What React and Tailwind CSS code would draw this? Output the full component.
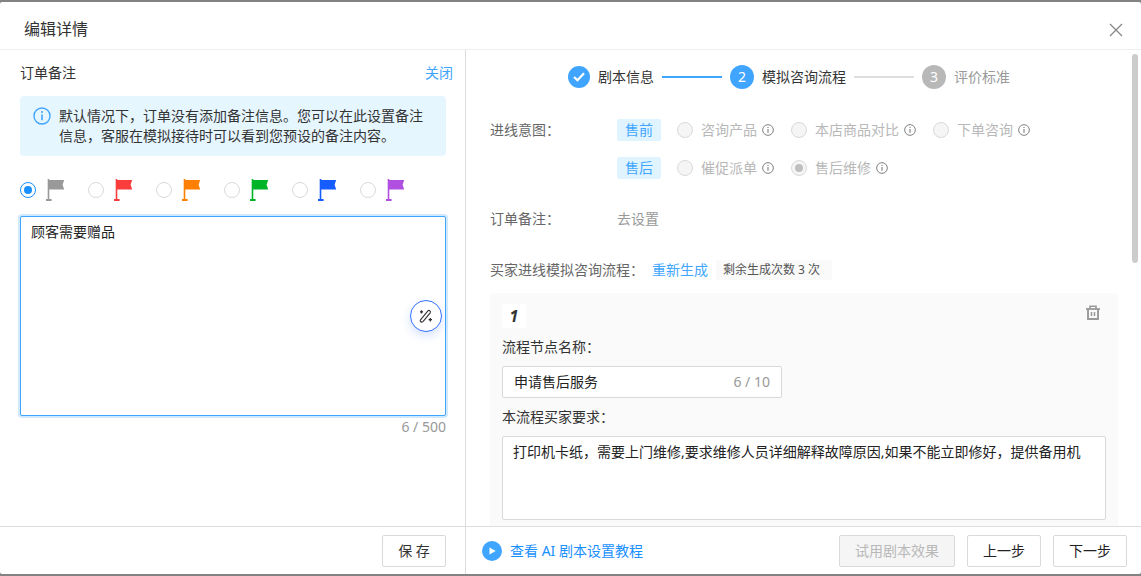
import { useState } from "react";

const FLAGS = [
  { id: "gray", label: "灰旗", color: "#999999" },
  { id: "red", label: "红旗", color: "#f93c3c" },
  { id: "orange", label: "橙旗", color: "#ff8000" },
  { id: "green", label: "绿旗", color: "#00b42a" },
  { id: "blue", label: "蓝旗", color: "#165dff" },
  { id: "purple", label: "紫旗", color: "#b150e0" },
];

const INTENTS = [
  { tag: "售前", options: ["咨询产品", "本店商品对比", "下单咨询"] },
  { tag: "售后", options: ["催促派单", "售后维修"] },
];

function FlagIcon({ color }) {
  return (
    <svg width="20" height="22" viewBox="0 0 20 22" aria-hidden>
      <path d="M1.700 0h1.600v20H5.600v2H0v-2h1.700z" fill={color} />
      <path d="M3 1h15.200l-1.600 4.800L18.200 10.500H3z" fill={color} />
    </svg>
  );
}

function InfoIcon({ className }) {
  return (
    <svg viewBox="0 0 18 18" fill="none" stroke="currentColor" className={className} aria-hidden>
      <circle cx="9" cy="9" r="8" strokeWidth="1.4" />
      <path d="M9 7.500v5.700" strokeWidth="1.600" />
      <circle cx="9" cy="5" r="1" fill="currentColor" stroke="none" />
    </svg>
  );
}

function WandIcon() {
  return (
    <svg width="14" height="14" viewBox="0 0 14 14" fill="none" stroke="#333" strokeWidth="1.1" aria-hidden>
      <path d="M1.300 11.200 8.900 1.900a1.500 1.500 0 0 1 2.300 1.900L4.200 12.300a1.600 1.600 0 0 1-2.700.1 1.100 1.100 0 0 1-.2-1.200z" />
      <path d="M2.500 1.300v3.200M.9 2.900h3.200M11.300 9v3.400M9.600 10.700H13" strokeWidth="1.300" />
    </svg>
  );
}

function TrashIcon() {
  return (
    <svg width="14" height="15" viewBox="0 0 14 15" fill="none" stroke="currentColor" aria-hidden>
      <path d="M0 4h14" strokeWidth="1.800" />
      <path d="M4 4V1.200h6V4" strokeWidth="1.600" />
      <path d="M2 4v10h10V4" strokeWidth="1.900" />
      <path d="M5.500 7v4M8.500 7v4" strokeWidth="1.500" />
    </svg>
  );
}

function Step({ number, title, state }) {
  const done = state === "done";
  const wait = state === "wait";
  return (
    <li className="flex items-center gap-2">
      <span
        className={`flex items-center justify-center rounded-full text-white ${
          done ? "size-[22px]" : "size-6"
        } ${wait ? "bg-[#b8b8b8]" : "bg-[#40a5ff]"}`}
      >
        {done ? (
          <svg width="12" height="10" viewBox="0 0 12 10" fill="none" stroke="#fff" strokeWidth="2.200" aria-hidden>
            <path d="m1 5 3.500 3.300L11 1.300" />
          </svg>
        ) : (
          number
        )}
      </span>
      <span className={wait ? "text-[#999]" : "text-[#333]"}>{title}</span>
    </li>
  );
}

function NotePanel() {
  const [flag, setFlag] = useState("gray");
  const [note, setNote] = useState("顾客需要赠品");

  return (
    <section className="flex w-[466px] shrink-0 flex-col border-r border-[#ddd]">
      <div className="min-h-0 flex-1 overflow-hidden pl-5 pt-3">
        <div className="flex justify-between pr-3">
          <label htmlFor="note">订单备注</label>
          <button type="button" className="text-[#40a5ff]">
            关闭
          </button>
        </div>

        <div className="mr-[19px] mt-3 flex gap-2 rounded bg-[#e6f6ff] px-[13px] py-2.5">
          <InfoIcon className="mt-px size-[18px] shrink-0 text-[#40a5ff]" />
          <p className="leading-5">
            默认情况下，订单没有添加备注信息。您可以在此设置备注信息，客服在模拟接待时可以看到您预设的备注内容。
          </p>
        </div>

        <div className="mt-[23px] flex" role="radiogroup" aria-label="旗帜">
          {FLAGS.map((item) => (
            <label key={item.id} className="flex w-[68px] items-center gap-2.5">
              <input
                type="radio"
                name="flag"
                aria-label={item.label}
                checked={flag === item.id}
                onChange={() => setFlag(item.id)}
                className="grid size-4 appearance-none place-content-center rounded-full border border-[#d9d9d9] bg-white before:size-2 before:rounded-full checked:border-[#1890ff] checked:before:bg-[#1890ff]"
              />
              <FlagIcon color={item.color} />
            </label>
          ))}
        </div>

        <div className="relative mr-[19px] mt-[15px]">
          <textarea
            id="note"
            value={note}
            maxLength={500}
            onChange={(e) => setNote(e.target.value)}
            className="block h-[200px] w-full resize-none rounded-xs border border-[#40a5ff] bg-white px-2.5 py-1 leading-[22px] text-[#222] shadow-[0_0_0_2px_rgba(24,144,255,0.2)] outline-none"
          />
          <button
            type="button"
            aria-label="智能润色"
            className="absolute right-1 top-[84px] flex size-8 items-center justify-center rounded-full border border-[#3370ff] bg-white shadow-[0_4px_10px_rgba(51,112,255,0.2)]"
          >
            <WandIcon />
          </button>
        </div>
        <p className="mr-[19px] text-right text-[#999]">{note.length} / 500</p>
      </div>

      <footer className="flex justify-end border-t border-[#ddd] pb-[7px] pr-[19px] pt-2">
        <button type="button" className="h-8 w-16 rounded-xs border border-[#d9d9d9] bg-white">
          保 存
        </button>
      </footer>
    </section>
  );
}

function IntentRow({ tag, options }) {
  return (
    <div className="flex items-center">
      <span className="mr-4 rounded-xs bg-[#e0f4ff] px-2 text-[#40a5ff]">{tag}</span>
      {options.map((option) => (
        <label key={option} className="mr-[17px] flex items-center text-[#b8b8b8]">
          <input
            type="radio"
            name="intent"
            disabled
            defaultChecked={option === "售后维修"}
            className="mr-2 grid size-4 appearance-none place-content-center rounded-full border border-[#d9d9d9] bg-[#f5f5f5] before:size-2 before:rounded-full checked:before:bg-[#bfbfbf]"
          />
          {option}
          <InfoIcon className="ml-[5px] size-3 text-[#777]" />
        </label>
      ))}
    </div>
  );
}

function ScriptPanel() {
  const [nodeName, setNodeName] = useState("申请售后服务");

  return (
    <section className="flex min-w-0 flex-1 flex-col">
      <div className="relative min-h-0 flex-1 overflow-hidden pl-6 pr-[23px] pt-[15px]">
        <ol className="flex items-center justify-center gap-2 pr-[30px]">
          <Step state="done" title="剧本信息" />
          <li className="h-0.5 w-[60px] bg-[#40a5ff]" aria-hidden />
          <Step state="active" number={2} title="模拟咨询流程" />
          <li className="h-0.5 w-[60px] bg-[#ddd]" aria-hidden />
          <Step state="wait" number={3} title="评价标准" />
        </ol>

        <div className="mt-[30px] flex">
          <span className="w-[127px] shrink-0 text-[#666]">进线意图：</span>
          <div className="flex flex-col gap-4">
            {INTENTS.map((row) => (
              <IntentRow key={row.tag} {...row} />
            ))}
          </div>
        </div>

        <div className="mt-[29px] flex">
          <span className="w-[127px] shrink-0 text-[#666]">订单备注：</span>
          <button type="button" className="text-[#999]">
            去设置
          </button>
        </div>

        <div className="mt-[29px] flex items-center gap-2">
          <span className="text-[#666]">买家进线模拟咨询流程：</span>
          <button type="button" className="text-[#40a5ff]">
            重新生成
          </button>
          <span className="bg-[#fafafa] pl-[7px] pr-3 text-xs leading-5 text-[#555]">剩余生成次数 3 次</span>
        </div>

        <div className="mt-3 rounded bg-[#fafafa] px-3 pb-6 pt-[11px]">
          <div className="flex items-start justify-between">
            <span className="flex size-6 items-center justify-center rounded-xs bg-white text-base font-bold italic">
              1
            </span>
            <button type="button" aria-label="删除流程" className="mr-1.5 mt-px text-[#999]">
              <TrashIcon />
            </button>
          </div>

          <label htmlFor="node-name" className="mt-2 block">
            流程节点名称：
          </label>
          <div className="mt-2 flex h-8 w-[280px] items-center rounded-xs border border-[#d9d9d9] bg-white px-[11px]">
            <input
              id="node-name"
              type="text"
              value={nodeName}
              maxLength={10}
              onChange={(e) => setNodeName(e.target.value)}
              className="min-w-0 flex-1 bg-transparent text-[#222] outline-none"
            />
            <span className="text-[#999]">{nodeName.length} / 10</span>
          </div>

          <label htmlFor="demand" className="mt-2 block">
            本流程买家要求：
          </label>
          <textarea
            id="demand"
            defaultValue="打印机卡纸，需要上门维修,要求维修人员详细解释故障原因,如果不能立即修好，提供备用机"
            className="mt-2 block h-[84px] w-full resize-none rounded-xs border border-[#d9d9d9] bg-white px-2.5 py-1 leading-[22px] text-[#222] outline-none"
          />
        </div>

        {/* scrollbar thumb */}
        <div className="absolute right-[3px] top-1 h-[209px] w-1.5 rounded-full bg-[#ccc]" aria-hidden />
      </div>

      <footer className="flex items-center justify-between border-t border-[#ddd] pb-[7px] pl-4 pr-3.5 pt-2">
        <a href="#guide" className="flex items-center gap-2 text-[#1890ff]">
          <svg width="20" height="20" viewBox="0 0 20 20" aria-hidden>
            <circle cx="10" cy="10" r="10" fill="#40a5ff" />
            <path d="M7.500 6.500v7l6.200-3.500z" fill="#fff" />
          </svg>
          查看 AI 剧本设置教程
        </a>
        <div className="flex gap-3">
          <button
            type="button"
            disabled
            className="h-8 rounded-xs border border-[#d9d9d9] bg-[#f5f5f5] px-[15px] text-[#b8b8b8]"
          >
            试用剧本效果
          </button>
          <button type="button" className="h-8 rounded-xs border border-[#d9d9d9] bg-white px-[15px] text-[#222]">
            上一步
          </button>
          <button type="button" className="h-8 rounded-xs border border-[#d9d9d9] bg-white px-[15px] text-[#222]">
            下一步
          </button>
        </div>
      </footer>
    </section>
  );
}

export default function App() {
  return (
    <div className="h-screen bg-[#848283] py-0.5 font-['Noto_Sans','Noto_Sans_CJK_SC',sans-serif] text-sm leading-[22px] text-[#333]">
      <div role="dialog" aria-labelledby="dialog-title" className="flex h-full flex-col rounded-xs bg-white">
        <header className="flex items-center justify-between border-b border-[#eee] pb-2 pl-6 pr-[18px] pt-4">
          <h1 id="dialog-title" className="text-base leading-[23px]">
            编辑详情
          </h1>
          <button type="button" aria-label="关闭弹窗">
            <svg width="14" height="14" viewBox="0 0 14 14" fill="none" stroke="#888" strokeWidth="1.300" aria-hidden>
              <path d="m1 1 12 12M13 1 1 13" />
            </svg>
          </button>
        </header>
        <main className="flex min-h-0 flex-1">
          <NotePanel />
          <ScriptPanel />
        </main>
      </div>
    </div>
  );
}
